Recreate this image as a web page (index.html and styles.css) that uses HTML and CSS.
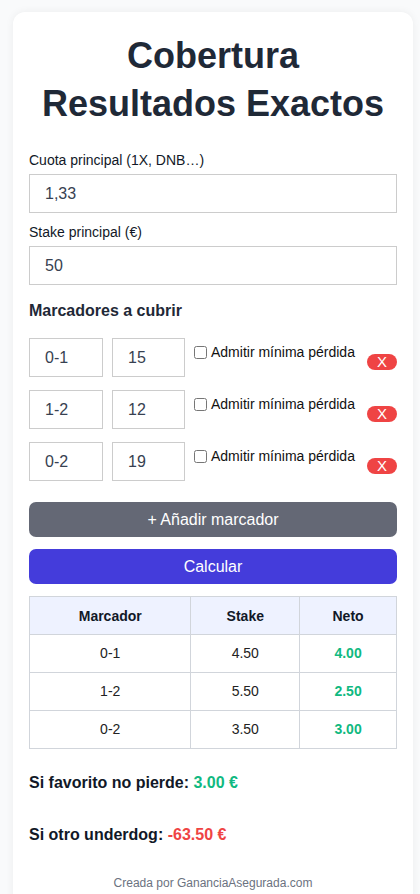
FILE: index.html
```html
<!DOCTYPE html>
<html lang="es">
<head>
  <meta charset="UTF-8" />
  <meta name="viewport" content="width=device-width, initial-scale=1.0"/>
  <title>Cobertura Resultados Exactos</title>
  <link rel="stylesheet" href="styles.css">
</head>
<body>

  <div class="card">
    <h1>Cobertura Resultados Exactos</h1>

    <label class="field-label first">Cuota principal (1X, DNB…)</label>
    <input class="field" id="cuota" value="1,33" />

    <label class="field-label">Stake principal (€)</label>
    <input class="field" id="stake" value="50" />

    <h3 class="section">Marcadores a cubrir</h3>

    <div id="marcadores">
      <div class="row">
        <input class="small" value="0-1" />
        <input class="small" value="15" />
        <label class="check"><input type="checkbox" /> Admitir mínima pérdida</label>
        <button class="remove">X</button>
      </div>
      <div class="row">
        <input class="small" value="1-2" />
        <input class="small" value="12" />
        <label class="check"><input type="checkbox" /> Admitir mínima pérdida</label>
        <button class="remove">X</button>
      </div>
      <div class="row">
        <input class="small" value="0-2" />
        <input class="small" value="19" />
        <label class="check"><input type="checkbox" /> Admitir mínima pérdida</label>
        <button class="remove">X</button>
      </div>
    </div>

    <button class="btn btn-add">+ Añadir marcador</button>
    <button class="btn btn-calc">Calcular</button>

    <table class="results">
      <thead>
        <tr><th class="c1">Marcador</th><th class="c2">Stake</th><th class="c3">Neto</th></tr>
      </thead>
      <tbody>
        <tr><td>0-1</td><td>4.50</td><td class="pos">4.00</td></tr>
        <tr><td>1-2</td><td>5.50</td><td class="pos">2.50</td></tr>
        <tr><td>0-2</td><td>3.50</td><td class="pos">3.00</td></tr>
      </tbody>
    </table>

    <p class="summary first">Si favorito no pierde: <span class="pos">3.00 €</span></p>
    <p class="summary">Si otro underdog: <span class="neg">-63.50 €</span></p>

    <p class="footer">Creada por GananciaAsegurada.com</p>
  </div>

</body>
</html>
```

FILE: styles.css
```css
body {
  margin: 0;
  background: #f9fafb;
  font-family: "Liberation Sans", Arial, sans-serif;
  color: #111827;
}
.card {
  box-sizing: border-box;
  width: 400px;
  margin: 12px 0 0 13px;
  padding: 20px 16px 20px;
  background: #fff;
  border-radius: 12px;
  box-shadow: 0 0 8px rgba(0, 0, 0, 0.06);
}
h1 {
  margin: 0;
  font-size: 36px;
  line-height: 48px;
  text-align: center;
  color: #1f2937;
}
.field-label {
  display: block;
  margin: 11px 0 6px;
  font-size: 14px;
  line-height: 16px;
}
.field-label.first {
  margin-top: 24px;
}
.field, .small {
  box-sizing: border-box;
  height: 39px;
  padding: 0 15px;
  font-family: "Liberation Sans", Arial, sans-serif;
  font-size: 16px;
  color: #374151;
  border: 1px solid #ccc;
  background: #fff;
}
.field {
  display: block;
  width: 100%;
}
.section {
  margin: 17px 0 18px;
  font-size: 16px;
  line-height: 18px;
  color: #1f2937;
}
.row {
  display: flex;
  align-items: flex-start;
  margin-bottom: 13px;
}
.small {
  width: 74px;
  margin-right: 9px;
}
.small + .small {
  width: 73px;
  margin-right: 5px;
}
.check {
  display: flex;
  align-items: center;
  margin-top: 6px;
  font-size: 14px;
  line-height: 16px;
  color: #111;
}
.check input {
  margin: 0 4px 0 4px;
  width: 13px;
  height: 13px;
}
.remove {
  margin: 16px 0 0 auto;
  width: 30px;
  height: 16px;
  padding: 0;
  border: none;
  border-radius: 8px;
  background: #ef4444;
  color: #fff;
  font-family: "Liberation Sans", Arial, sans-serif;
  font-size: 15px;
  line-height: 16px;
}
.btn {
  display: block;
  width: 100%;
  height: 35px;
  border: none;
  border-radius: 7px;
  color: #fff;
  font-family: "Liberation Sans", Arial, sans-serif;
  font-size: 16px;
}
.btn-add {
  margin-top: 21px;
  background: #646875;
}
.btn-calc {
  margin-top: 12px;
  background: #443cdb;
}
.results {
  width: 100%;
  margin-top: 12px;
  border-collapse: collapse;
  font-size: 14px;
}
.results th, .results td {
  border: 1px solid #d1d5db;
  padding: 10px 8px 11px;
  line-height: 16px;
  text-align: center;
}
.results th {
  background: #eef2ff;
  padding: 11px 8px 10px;
  color: #111827;
}
.results td {
  color: #222;
}
.c1 { width: 44%; }
.c2 { width: 29.6%; }
.results .pos, .pos {
  color: #10b981;
  font-weight: bold;
}
.neg {
  color: #ef4444;
  font-weight: bold;
}
.summary {
  margin: 34px 0 0;
  font-size: 16px;
  line-height: 18px;
  font-weight: bold;
}
.summary.first {
  margin-top: 25px;
}
.footer {
  margin: 32px 0 0;
  font-size: 12px;
  line-height: 14px;
  text-align: center;
  color: #6b7280;
}
```
